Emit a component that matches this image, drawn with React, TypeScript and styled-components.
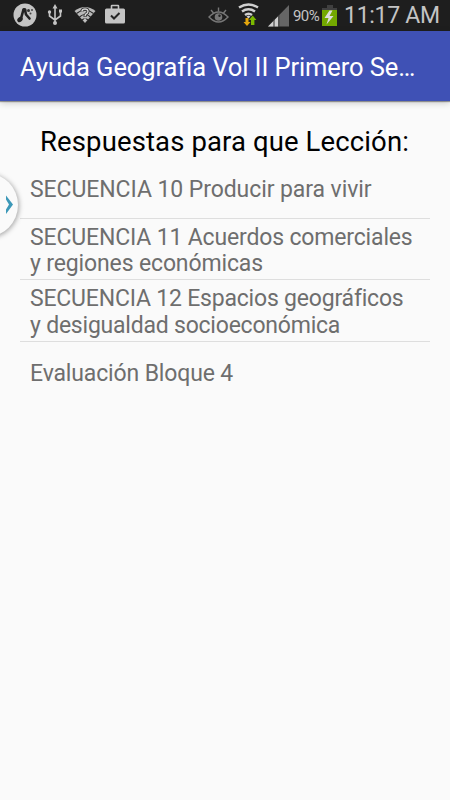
import React from "react";
import styled, { createGlobalStyle } from "styled-components";

const GlobalStyle = createGlobalStyle`
  html, body { margin: 0; background: #fafafa; }
  *, *::before { box-sizing: border-box; }
`;

const Screen = styled.div`
  position: relative;
  width: 450px;
  height: 800px;
  overflow: hidden;
  background: #fafafa;
  font-family: Roboto, sans-serif;
  display: flex;
  flex-direction: column;
`;

const StatusBar = styled.header`
  flex: none;
  height: 31px;
  background: #1e1e1e;
  color: #c4c4c4;
  display: flex;
  justify-content: space-between;
`;

const StatusIcons = styled.svg`
  display: block;
  flex: none;
`;

const StatusRight = styled.div`
  display: flex;
  width: 242px;
`;

const Percent = styled.span`
  width: 29px;
  font-size: 15px;
  line-height: 32px;
  letter-spacing: -0.6px;
  white-space: nowrap;
`;

const Clock = styled.span`
  margin-left: 5px;
  font-size: 23px;
  line-height: 31px;
  letter-spacing: -0.3px;
  white-space: nowrap;
`;

const AppBar = styled.div`
  position: relative;
  flex: none;
  height: 70px;
  padding: 0 20px;
  background: #3f51b5;
  box-shadow: 0 1px 1px rgba(0, 0, 0, 0.35), 0 2px 7px rgba(0, 0, 0, 0.2);
`;

const Title = styled.h1`
  margin: 0;
  color: #fff;
  font-size: 25.5px;
  font-weight: 400;
  line-height: 72px;
  letter-spacing: -0.1px;
  white-space: nowrap;
`;

const Content = styled.main`
  padding: 20px 20px 0;
`;

const Heading = styled.h2`
  margin: 0;
  height: 37px;
  padding-left: 20px;
  color: #000;
  font-size: 27.5px;
  font-weight: 400;
  line-height: 41px;
  letter-spacing: 0.12px;
  white-space: nowrap;
`;

const List = styled.ul`
  margin: 0;
  padding: 0;
  list-style: none;
`;

const Row = styled.li`
  height: 61.35px;
  padding: 4px 10px 0;
  display: flex;
  flex-direction: column;
  justify-content: center;
  color: #6e6e6e;
  font-size: 23px;
  line-height: 26.5px;

  &:first-child { height: 60px; }
  & + & { border-top: 1px solid #dedede; }
`;

const Line = styled.span<{ $spacing?: number }>`
  white-space: nowrap;
  letter-spacing: ${({ $spacing = 0 }) => $spacing}px;
`;

const EdgeHandle = styled.button`
  position: absolute;
  left: -46px;
  top: 173px;
  width: 64px;
  height: 64px;
  padding: 0;
  border: 0;
  border-radius: 50%;
  background: #fafafa;
  box-shadow: 1px 1px 5px rgba(0, 0, 0, 0.35);
`;

const Chevron = styled.svg`
  position: absolute;
  left: 51px;
  top: 21px;
`;

const rows: { text: string; spacing?: number }[][] = [
  [{ text: "SECUENCIA 10 Producir para vivir", spacing: -0.08 }],
  [
    { text: "SECUENCIA 11 Acuerdos comerciales", spacing: -0.16 },
    { text: "y regiones económicas", spacing: -0.14 },
  ],
  [
    { text: "SECUENCIA 12 Espacios geográficos", spacing: -0.2 },
    { text: "y desigualdad socioeconómica", spacing: -0.22 },
  ],
  [{ text: "Evaluación Bloque 4", spacing: -0.14 }],
];

const Notifications = () => (
  <StatusIcons width="150" height="31" viewBox="0 0 150 31" fill="none">
    <circle cx="25" cy="15" r="11.5" fill="#c4c4c4" />
    <path d="M23.500 9.500 21 18.500M25 10l1 4.500 3.500 4" stroke="#222" strokeWidth="2.600" strokeLinecap="round" />
    <ellipse cx="20" cy="19.500" rx="3" ry="2.300" transform="rotate(-40 20 19.500)" fill="#222" />
    <circle cx="24.500" cy="10" r="2" fill="#222" />
    <circle cx="28.500" cy="10.500" r="1.500" fill="#333" />
    <circle cx="32" cy="10" r="1" fill="#444" />
    <circle cx="30.500" cy="13.500" r="1" fill="#444" />
    <g stroke="#c4c4c4" strokeWidth="1.600">
      <path d="M55 7v16M49.500 12v4l5.500 4M60.500 11v5l-5.500 4" />
    </g>
    <path d="M52.500 8.500 55 4l2.500 4.500zM59 9.500h3v3h-3z" fill="#c4c4c4" />
    <circle cx="49.500" cy="12" r="1.700" fill="#c4c4c4" />
    <circle cx="55" cy="23" r="2" fill="#c4c4c4" />
    <path d="M74.500 11Q85 3 95.500 11L85 23z" fill="#b8b8b8" />
    <path d="M76.500 13.500Q85 6.500 93.500 13.500M79.500 17Q85 12 90.500 17M82 20Q85 17.500 88 20" stroke="#262626" strokeWidth="1.100" />
    <path d="M82 11.500q0-2.500 3-2.500t3 2.500q0 1.500-2 2.500-1 1-1 3" stroke="#222" strokeWidth="3" />
    <path d="M82 11.500q0-2.500 3-2.500t3 2.500q0 1.500-2 2.500-1 1-1 2.500M85 18.500v2" stroke="#d0d0d0" strokeWidth="1.500" />
    <path d="M106.500 8.500h17q1.500 0 1.500 1.500v12q0 1.500-1.500 1.500h-17q-1.500 0-1.500-1.500V10q0-1.500 1.500-1.500z" fill="#c4c4c4" />
    <path d="M111.500 9V6q0-.5.5-.5h6q.5 0 .5.500v3" stroke="#c4c4c4" strokeWidth="1.600" />
    <path d="m111 15.500 3 3 5.500-5.500" stroke="#252525" strokeWidth="2" />
  </StatusIcons>
);

const Connectivity = () => (
  <StatusIcons width="85" height="31" viewBox="208 0 85 31" fill="none">
    <g stroke="#777" strokeWidth="1.400">
      <path d="M209 17q9.500-10 19 0-9.500 10-19 0z" />
      <path d="m211 10 2.500 3M218.500 7.500v4M226 10l-2.500 3" />
    </g>
    <circle cx="218.500" cy="17" r="3.800" fill="#777" />
    <circle cx="219.500" cy="15.800" r="1.200" fill="#242424" />
    <g stroke="#d0d0d0" strokeWidth="2.500">
      <path d="M239 7.500q9.500-6 19 0M242 11.500q6.500-4.500 13 0M245 15q3.500-2.500 7 0" />
    </g>
    <path d="m246.500 16.500 2-1 2 1-2 2z" fill="#d0d0d0" />
    <path d="M245.500 18h3v4h2l-3.500 4-3.500-4h2z" fill="#e5a60d" />
    <path d="M251 25v-5h-2l3.700-4.500 3.700 4.500h-2v5z" fill="#7bb900" />
    <path d="M268 26.500 289 5v21.500z" fill="#666" />
    <path d="M268 26.500 278.500 16v10.500z" fill="#d0d0d0" />
    <path d="M274 19v8M278.800 15v12" stroke="#333" />
  </StatusIcons>
);

const Battery = () => (
  <StatusIcons width="17" height="31" viewBox="322 0 17 31">
    <path d="M327 5h6v3h4v3h-15V8h5z" fill="#404040" />
    <path d="M322 10h15v16h-15z" fill="#73a800" />
    <path d="m329.500 10.500-5 7.500h4l-2 6.500 7-8.500h-4l3-5.500z" fill="#ddd" />
  </StatusIcons>
);

export default function App() {
  return (
    <>
      <GlobalStyle />
      <Screen>
        <StatusBar>
          <Notifications />
          <StatusRight>
            <Connectivity />
            <Percent>90%</Percent>
            <Battery />
            <Clock>11:17 AM</Clock>
          </StatusRight>
        </StatusBar>
        <AppBar>
          <Title>Ayuda Geografía Vol II Primero Se…</Title>
        </AppBar>
        <Content>
          <Heading>Respuestas para que Lección:</Heading>
          <List>
            {rows.map((lines) => (
              <Row key={lines[0].text}>
                {lines.map((line) => (
                  <Line key={line.text} $spacing={line.spacing}>{line.text}</Line>
                ))}
              </Row>
            ))}
          </List>
        </Content>
        <EdgeHandle aria-label="Abrir panel">
          <Chevron width="10" height="22" viewBox="0 0 10 22">
            <path d="M1 1.500 8 10.500 1 20v-4.500l3-5-3-5z" fill="#3c98b8" />
          </Chevron>
        </EdgeHandle>
      </Screen>
    </>
  );
}
